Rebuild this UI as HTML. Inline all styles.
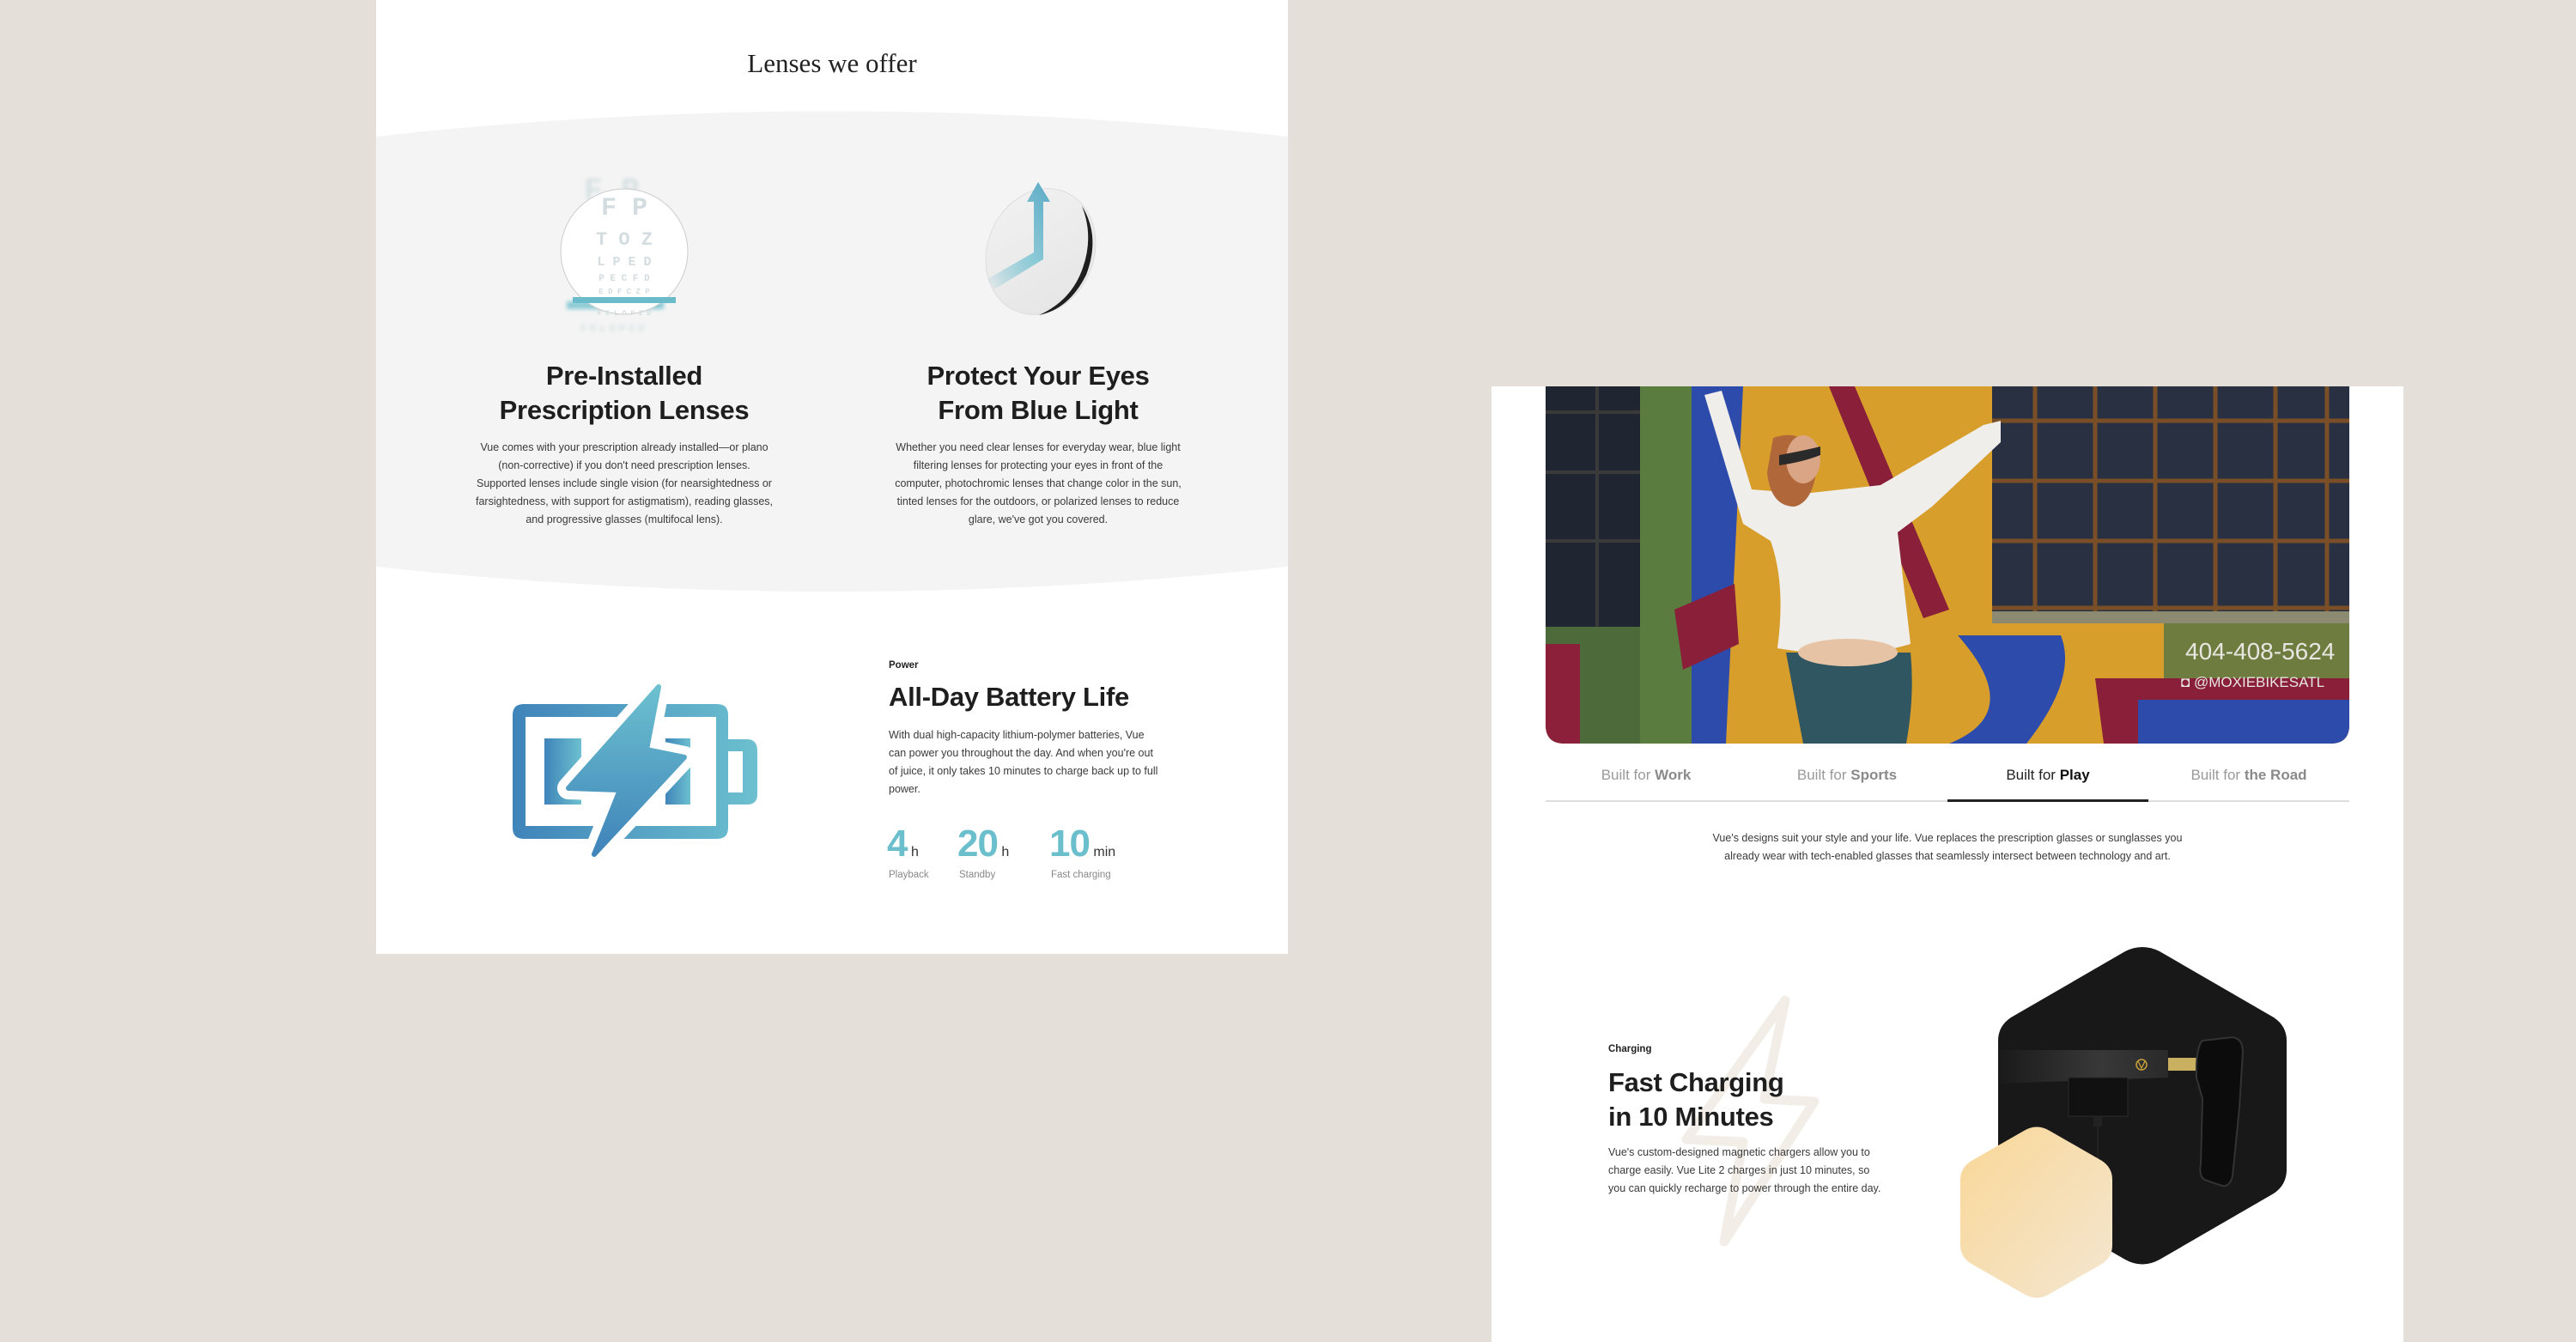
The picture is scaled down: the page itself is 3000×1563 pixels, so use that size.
<!DOCTYPE html>
<html><head><meta charset="utf-8">
<style>
*{margin:0;padding:0;box-sizing:border-box}
body{width:3000px;height:1563px;background:#e4dfd9;position:relative;overflow:hidden;font-family:"Liberation Sans",sans-serif;color:#1e1e1e}
.a{position:absolute}
.c{text-align:center}
.h{font-weight:bold;font-size:31px;line-height:40px;letter-spacing:-0.3px;color:#1e1e1e}
.p{font-size:12.5px;line-height:21px;color:#3a3a3a}
.lab{font-size:11.5px;font-weight:bold;color:#222}
.num{font-size:44px;font-weight:bold;color:#6bbfcc;letter-spacing:-1px}
.unit{font-size:16px;color:#333}
.sl{font-size:11.5px;color:#888}
.tab{position:absolute;top:893px;width:234px;text-align:center;font-size:17px;color:#9a9a9a}
.tab b{color:#8a8a8a}
</style></head><body>

<div class="a" style="left:438px;top:0;width:1062px;height:1111px;background:#fff;overflow:hidden">
  <svg class="a" style="left:0;top:0" width="1062" height="1111">
    <path d="M0 159 Q531 100 1062 159 L1062 660 Q531 718 0 660 Z" fill="#f4f4f4"/>
  </svg>
</div>
<div class="a c" style="left:438px;top:56px;width:1062px;font-family:'Liberation Serif',serif;font-size:31px;color:#222">Lenses we offer</div>

<svg class="a" style="left:640px;top:200px" width="180" height="190">
  <defs><filter id="bl"><feGaussianBlur stdDeviation="2.5"/></filter></defs>
  <g filter="url(#bl)" fill="#d6e0e2" font-family="Liberation Mono,monospace" font-weight="bold">
    <text x="40" y="32" font-size="36">F P</text>
    <rect x="20" y="151" width="113" height="9" fill="#8ccad6"/>
    <text x="36" y="186" font-size="12" letter-spacing="4">FELOPZD</text>
  </g>
  <ellipse cx="87" cy="93" rx="74" ry="73" fill="#fff" stroke="#ccc" stroke-width="1"/>
  <g fill="#d3dcdf" font-family="Liberation Mono,monospace" font-weight="bold" text-anchor="middle">
    <text x="87" y="50" font-size="30">F P</text>
    <text x="87" y="85" font-size="22">T O Z</text>
    <text x="87" y="109" font-size="15">L P E D</text>
    <text x="87" y="127" font-size="11">P E C F D</text>
    <text x="87" y="142" font-size="9">E D F C Z P</text>
    <rect x="27" y="146" width="120" height="7" fill="#6bbccb"/>
    <text x="87" y="167" font-size="8">F E L O P Z D</text>
  </g>
</svg>

<svg class="a" style="left:1120px;top:200px" width="180" height="180">
  <defs>
    <linearGradient id="lg" x1="0" y1="0" x2="1" y2="1"><stop offset="0" stop-color="#f2f2f2"/><stop offset="1" stop-color="#e4e4e4"/></linearGradient>
    <linearGradient id="ar" x1="0" y1="1" x2="1" y2="0"><stop offset="0" stop-color="#6bbccb" stop-opacity="0"/><stop offset=".5" stop-color="#8ccad6"/><stop offset="1" stop-color="#5ba9c6"/></linearGradient>
  </defs>
  <ellipse cx="92" cy="93" rx="62" ry="75" transform="rotate(22 92 93)" fill="url(#lg)" stroke="#ddd"/>
  <path d="M140 40 Q162 75 145 120 Q125 160 90 167 Q128 150 141 112 Q154 75 140 40Z" fill="#1e1e1e"/>
  <path d="M30 125 L84 94 L84 35 L76 35 L89 12 L103 35 L95 35 L95 102 L38 137Z" fill="url(#ar)"/>
</svg>

<div class="a c h" style="left:527px;top:418px;width:400px">Pre-Installed<br>Prescription Lenses</div>
<div class="a c p" style="left:527px;top:511px;width:400px">Vue comes with your prescription already installed—or plano<br>(non-corrective) if you don't need prescription lenses.<br>Supported lenses include single vision (for nearsightedness or<br>farsightedness, with support for astigmatism), reading glasses,<br>and progressive glasses (multifocal lens).</div>
<div class="a c h" style="left:1009px;top:418px;width:400px">Protect Your Eyes<br>From Blue Light</div>
<div class="a c p" style="left:1009px;top:511px;width:400px">Whether you need clear lenses for everyday wear, blue light<br>filtering lenses for protecting your eyes in front of the<br>computer, photochromic lenses that change color in the sun,<br>tinted lenses for the outdoors, or polarized lenses to reduce<br>glare, we've got you covered.</div>

<svg class="a" style="left:590px;top:795px" width="300" height="210" viewBox="0 0 300 210">
  <defs><linearGradient id="bg" x1="0" y1="0" x2="1" y2="0"><stop offset="0" stop-color="#3f84ba"/><stop offset="1" stop-color="#6cc0cf"/></linearGradient>
  <linearGradient id="bo" x1="0" y1="1" x2="0" y2="0"><stop offset="0" stop-color="#3f84ba"/><stop offset="1" stop-color="#6cc0cf"/></linearGradient></defs>
  <path fill-rule="evenodd" fill="url(#bg)" d="M20 25 H245 Q258 25 258 38 V66 H280 Q292 66 292 80 V130 Q292 142 280 142 H258 V169 Q258 182 245 182 H20 Q7 182 7 169 V38 Q7 25 20 25Z M22 40 V167 H244 V40Z M258 80 V128 H275 V80Z"/>
  <rect x="44" y="65" width="43" height="77" fill="url(#bg)"/>
  <rect x="185" y="65" width="29" height="77" fill="url(#bg)"/>
  <path d="M177 5 L72 123 L132 125 L102 200 L207 87 L163 78 Z" fill="#fff" stroke="#fff" stroke-width="26" stroke-linejoin="round"/>
  <path d="M177 5 L72 123 L132 125 L102 200 L207 87 L163 78 Z" fill="url(#bo)" stroke="url(#bo)" stroke-width="6" stroke-linejoin="round"/>
</svg>

<div class="a lab" style="left:1035px;top:769px">Power</div>
<div class="a h" style="left:1035px;top:792px">All-Day Battery Life</div>
<div class="a p" style="left:1035px;top:846px;width:340px">With dual high-capacity lithium-polymer batteries, Vue<br>can power you throughout the day. And when you're out<br>of juice, it only takes 10 minutes to charge back up to full<br>power.</div>
<div class="a" style="left:1033px;top:958px"><span class="num">4</span> <span class="unit">h</span></div>
<div class="a" style="left:1115px;top:958px"><span class="num">20</span> <span class="unit">h</span></div>
<div class="a" style="left:1222px;top:958px"><span class="num">10</span> <span class="unit">min</span></div>
<div class="a sl" style="left:1035px;top:1013px">Playback</div>
<div class="a sl" style="left:1117px;top:1013px">Standby</div>
<div class="a sl" style="left:1224px;top:1013px">Fast charging</div>

<div class="a" style="left:1737px;top:450px;width:1062px;height:1113px;background:#fff"></div>

<svg class="a" style="left:1800px;top:450px" width="936" height="416" viewBox="0 0 936 416">
  <defs><clipPath id="pc"><path d="M0 0 H936 V394 Q936 416 914 416 H22 Q0 416 0 394Z"/></clipPath></defs>
  <g clip-path="url(#pc)">
    <rect width="936" height="416" fill="#d89e2c"/>
    <rect x="0" y="0" width="110" height="280" fill="#1f2632"/>
    <g stroke="#3a3a3a" stroke-width="4"><line x1="0" y1="30" x2="110" y2="30"/><line x1="0" y1="100" x2="110" y2="100"/><line x1="0" y1="180" x2="110" y2="180"/><line x1="60" y1="0" x2="60" y2="280"/></g>
    <rect x="0" y="280" width="110" height="136" fill="#4d6a3a"/>
    <rect x="0" y="300" width="40" height="116" fill="#8c1f3a"/>
    <rect x="110" y="0" width="60" height="416" fill="#5b7c3f"/>
    <path d="M170 0 H230 L210 416 H170 Z" fill="#2d4bab"/>
    <path d="M150 260 L220 230 L225 300 L160 330Z" fill="#8a1f3a"/>
    <path d="M330 0 L360 0 L470 260 L440 270Z" fill="#8a1f3a"/>
    <path d="M480 290 Q560 380 470 416 H560 Q620 340 600 290Z" fill="#2d4bab"/>
    <rect x="520" y="0" width="416" height="262" fill="#283041"/>
    <g stroke="#7a4f28" stroke-width="5" fill="none">
      <line x1="520" y1="40" x2="936" y2="40"/><line x1="520" y1="110" x2="936" y2="110"/><line x1="520" y1="180" x2="936" y2="180"/><line x1="520" y1="258" x2="936" y2="258"/>
      <line x1="570" y1="0" x2="570" y2="262"/><line x1="640" y1="0" x2="640" y2="262"/><line x1="710" y1="0" x2="710" y2="262"/><line x1="780" y1="0" x2="780" y2="262"/><line x1="850" y1="0" x2="850" y2="262"/><line x1="910" y1="0" x2="910" y2="262"/>
    </g>
    <rect x="520" y="262" width="416" height="14" fill="#8c8a70"/>
    <rect x="720" y="276" width="216" height="80" fill="#6f7c3f"/>
    <path d="M640 340 H936 V416 H650Z" fill="#8a1f3a"/>
    <rect x="690" y="365" width="246" height="51" fill="#2d4bab"/>
    <text x="745" y="318" font-family="Liberation Sans,sans-serif" font-size="28" fill="#e8e6e0">404-408-5624</text>
    <text x="740" y="350" font-family="Liberation Sans,sans-serif" font-size="17" fill="#e8e6e0">◘ @MOXIEBIKESATL</text>
    <path d="M280 310 Q295 390 300 416 H420 Q430 360 425 310Z" fill="#2f5661"/>
    <path d="M185 10 L205 5 L240 120 L300 125 L390 115 L510 45 L530 40 L530 65 L450 140 L410 170 L425 300 Q360 320 270 305 Q280 230 262 180 L230 160 Z" fill="#efeeea"/>
    <path d="M265 60 Q310 45 315 100 Q310 135 290 140 Q262 140 258 100Z" fill="#b0683a"/>
    <ellipse cx="300" cy="85" rx="20" ry="28" fill="#d9a585"/>
    <path d="M272 80 Q300 75 320 70 L320 80 Q300 88 272 92Z" fill="#2a2a2a"/>
    <ellipse cx="352" cy="310" rx="58" ry="16" fill="#e7c3a6"/>
  </g>
</svg>

<div class="tab" style="left:1800px">Built for <b>Work</b></div>
<div class="tab" style="left:2034px">Built for <b>Sports</b></div>
<div class="tab" style="left:2268px;color:#222">Built for <b style="color:#111">Play</b></div>
<div class="tab" style="left:2502px">Built for <b>the Road</b></div>
<div class="a" style="left:1800px;top:932px;width:936px;height:2px;background:#ddd"></div>
<div class="a" style="left:2268px;top:931px;width:234px;height:3px;background:#222"></div>
<div class="a c p" style="left:1900px;top:966px;width:736px">Vue's designs suit your style and your life. Vue replaces the prescription glasses or sunglasses you<br>already wear with tech-enabled glasses that seamlessly intersect between technology and art.</div>

<svg class="a" style="left:1930px;top:1140px" width="200" height="330" viewBox="1930 1140 200 330">
  <path d="M2079 1165 L1964 1327 L2030 1330 L2008 1446 L2113 1283 L2055 1280 Z" fill="none" stroke="#f2eee7" stroke-width="11" stroke-linejoin="round"/>
</svg>
<div class="a lab" style="left:1873px;top:1216px">Charging</div>
<div class="a h" style="left:1873px;top:1241px">Fast Charging<br>in 10 Minutes</div>
<div class="a p" style="left:1873px;top:1332px;width:340px">Vue's custom-designed magnetic chargers allow you to<br>charge easily. Vue Lite 2 charges in just 10 minutes, so<br>you can quickly recharge to power through the entire day.</div>

<svg class="a" style="left:2270px;top:1095px" width="410" height="420" viewBox="2270 1095 410 420">
  <defs>
    <linearGradient id="yg" x1="0" y1="0" x2="1" y2="1"><stop offset="0" stop-color="#f9d797"/><stop offset="1" stop-color="#f4e6d1"/></linearGradient>
    <linearGradient id="tg" x1="0" y1="0" x2="1" y2="0"><stop offset="0" stop-color="#1a1a1a"/><stop offset=".6" stop-color="#383838"/><stop offset="1" stop-color="#2a2a2a"/></linearGradient>
  </defs>
  <path d="M2475 1108 Q2495 1098 2515 1108 L2648 1185 Q2663 1195 2663 1212 L2663 1362 Q2663 1380 2648 1390 L2515 1467 Q2495 1478 2475 1467 L2342 1390 Q2327 1380 2327 1362 L2327 1212 Q2327 1195 2342 1185Z" fill="#181818"/>
  <path d="M2327 1223 L2525 1223 L2525 1255 L2327 1262Z" fill="url(#tg)"/>
  <circle cx="2494" cy="1240" r="6" fill="none" stroke="#c9a23a" stroke-width="1.5"/>
  <path d="M2490 1236 L2494 1244 L2498 1236" fill="none" stroke="#c9a23a" stroke-width="1.3"/>
  <rect x="2525" y="1232" width="35" height="15" fill="#c9b060"/>
  <path d="M2565 1212 L2600 1208 Q2612 1210 2612 1225 L2608 1290 L2600 1370 Q2596 1385 2585 1380 L2570 1375 Q2560 1372 2563 1355 L2565 1280 L2558 1255 Q2557 1220 2565 1212Z" fill="#0c0c0c" stroke="#333" stroke-width="2"/>
  <rect x="2409" y="1255" width="69" height="45" fill="#111" stroke="#2c2c2c"/>
  <rect x="2438" y="1300" width="10" height="12" fill="#222"/>
  <rect x="2442" y="1312" width="2" height="40" fill="#222"/>
  <path d="M2357 1317 Q2372 1308 2387 1317 L2448 1352 Q2460 1360 2460 1374 L2460 1450 Q2460 1464 2448 1472 L2387 1507 Q2372 1516 2357 1507 L2296 1472 Q2283 1464 2283 1450 L2283 1374 Q2283 1360 2296 1352Z" fill="url(#yg)"/>
</svg>

</body></html>
